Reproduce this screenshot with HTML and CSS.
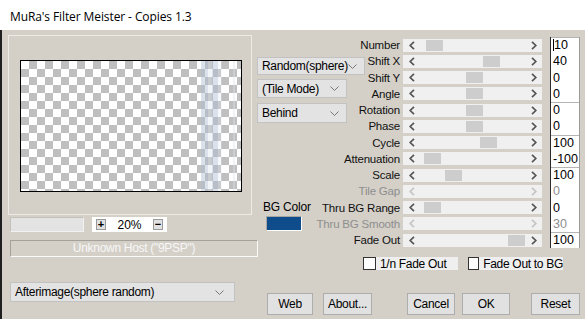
FILE: index.html
```html
<!DOCTYPE html>
<html lang="en">
	<head>
		<meta charset="UTF-8" />
		<meta name="viewport" content="width=device-width, initial-scale=1.0" />
		<title>MuRa's Filter Meister - Copies 1.3</title>
		<link rel="stylesheet" href="styles.css">
	</head>
	<body>
		<div class="titlebar">MuRa's Filter Meister - Copies 1.3</div>

		<div class="client">
			<div class="left">
				<div class="groupbox">
					<div class="preview"><div class="streak"></div></div>
				</div>

				<div class="zoom-row">
					<div class="progress"></div>
					<div class="zoom">
						<span class="zbtn">+</span>
						<span class="zval">20%</span>
						<span class="zbtn">&minus;</span>
					</div>
				</div>

				<div class="host">Unknown Host ("9PSP")</div>

				<div class="select select-wide">
					<span>Afterimage(sphere random)</span>
					<svg width="9" height="5" viewBox="0 0 9 5"><polyline points="0.5,0.5 4.5,4.5 8.5,0.5" /></svg>
				</div>
			</div>

			<div class="right">
				<div class="top">
					<div class="mid">
						<div class="select select-random">
							<span>Random(sphere)</span>
							<svg width="9" height="5" viewBox="0 0 9 5"><polyline points="0.5,0.5 4.5,4.5 8.5,0.5" /></svg>
						</div>
						<div class="select select-tile">
							<span>(Tile Mode)</span>
							<svg width="9" height="5" viewBox="0 0 9 5"><polyline points="0.5,0.5 4.5,4.5 8.5,0.5" /></svg>
						</div>
						<div class="select select-behind">
							<span>Behind</span>
							<svg width="9" height="5" viewBox="0 0 9 5"><polyline points="0.5,0.5 4.5,4.5 8.5,0.5" /></svg>
						</div>

						<div class="bg-label">BG Color</div>
						<div class="swatch"></div>
					</div>

					<div class="sliders" id="sliders"></div>
				</div>

				<div class="checks">
					<div class="check"><span class="box"></span>1/n Fade Out</div>
					<div class="check check-2"><span class="box"></span>Fade Out to BG</div>
				</div>

				<div class="buttons">
					<button class="btn btn-web">Web</button>
					<button class="btn btn-about">About...</button>
					<button class="btn btn-cancel">Cancel</button>
					<button class="btn btn-ok">OK</button>
					<button class="btn btn-reset">Reset</button>
				</div>
			</div>
		</div>

		<script>
			// label, value, thumb offset in px (null = disabled), group start
			const rows = [
				["Number", "10", 6, true],
				["Shift X", "40", 63, false],
				["Shift Y", "0", 46, false],
				["Angle", "0", 46, false],
				["Rotation", "0", 46, true],
				["Phase", "0", 46, false],
				["Cycle", "100", 60, true],
				["Attenuation", "-100", 4, false],
				["Scale", "100", 25, true],
				["Tile Gap", "0", null, false],
				["Thru BG Range", "0", 4, false],
				["Thru BG Smooth", "30", null, false],
				["Fade Out", "100", 88, true],
			];

			const left = '<svg width="6" height="9" viewBox="0 0 6 9"><polyline points="5,0.8 1.2,4.5 5,8.2" /></svg>';
			const right = '<svg width="6" height="9" viewBox="0 0 6 9"><polyline points="1,0.8 4.8,4.5 1,8.2" /></svg>';

			const sliders = document.getElementById("sliders");
			rows.forEach(([label, value, pos, group], i) => {
				const off = pos === null;

				const name = document.createElement("div");
				name.className = "s-label" + (off ? " off" : "");
				name.innerHTML = "<span>" + label + "</span>";

				const track = document.createElement("div");
				track.className = "track" + (off ? " off" : "");
				let rail = '<div class="rail">';
				if (!off) rail += '<div class="thumb" style="margin-left:' + pos + 'px"></div>';
				rail += "</div>";
				track.innerHTML = '<span class="arrow">' + left + "</span>" + rail + '<span class="arrow">' + right + "</span>";

				const val = document.createElement("div");
				val.className = "val" + (off ? " off" : "") + (group ? " group" : "");
				val.innerHTML = (i === 0 ? '<span class="caret"></span>' : "") + value;

				sliders.append(name, track, val);
			});
		</script>
	</body>
</html>
```

FILE: styles.css
```css
* {
	box-sizing: border-box;
}
body {
	margin: 0;
	width: 585px;
	height: 319px;
	overflow: hidden;
	font-family: "Liberation Sans", Arial, sans-serif;
	font-size: 11px;
	letter-spacing: -0.3px;
	background-color: #d4d0c8;
	color: #000;
}
.titlebar {
	height: 30px;
	background-color: #fff;
	padding: 8px 0 0 10px;
	font-family: "Open Sans", "Liberation Sans", sans-serif;
	font-size: 12px;
	letter-spacing: -0.1px;
	color: #000;
}
.client {
	display: flex;
	height: 289px;
	border-left: 2px solid #1f1f1f;
	padding-left: 6px;
}

/* left column */
.left {
	width: 249px;
	flex-shrink: 0;
	padding-top: 5px;
}
.groupbox {
	width: 244px;
	height: 180px;
	border: 1px solid #ecebe6;
	padding: 24px 0 0 11px;
}
.preview {
	width: 222px;
	height: 132px;
	border: 1px solid #000;
	background-color: #fff;
	background-image: conic-gradient(#bfbfbf 25%, transparent 0 50%, #bfbfbf 0 75%, transparent 0);
	background-size: 16px 16px;
	overflow: hidden;
}
.streak {
	width: 222px;
	height: 130px;
	background: linear-gradient(90deg,
		transparent 180px,
		rgba(175, 190, 210, 0.45) 180px,
		rgba(175, 190, 210, 0.45) 187px,
		rgba(215, 225, 235, 0.35) 187px,
		rgba(215, 225, 235, 0.35) 191px,
		rgba(175, 190, 210, 0.45) 191px,
		rgba(175, 190, 210, 0.45) 197px,
		rgba(225, 232, 240, 0.3) 197px,
		rgba(225, 232, 240, 0.3) 201px,
		transparent 201px,
		transparent 212px,
		rgba(220, 228, 236, 0.4) 212px,
		rgba(220, 228, 236, 0.4) 214px,
		transparent 214px);
}
.zoom-row {
	display: flex;
	gap: 8px;
	margin: 2px 0 0 2px;
	height: 15px;
}
.progress {
	width: 74px;
	background-color: #e3e3e3;
	border: 1px solid #c4c1ba;
	border-right-color: #f2f2f2;
	border-bottom-color: #f2f2f2;
}
.zoom {
	width: 75px;
	background-color: #fff;
	display: flex;
	align-items: center;
	padding: 0 4px;
}
.zbtn {
	width: 10px;
	height: 11px;
	background-color: #e1e1e1;
	border: 1px solid #9a9a9a;
	font-size: 11px;
	font-weight: bold;
	line-height: 8px;
	text-align: center;
	letter-spacing: 0;
}
.zval {
	flex: 1;
	text-align: center;
	font-size: 12px;
	letter-spacing: 0;
}
.host {
	margin: 8px 0 0 2px;
	width: 248px;
	height: 17px;
	border: 1px solid #a4a19a;
	border-right-color: #fafafa;
	border-bottom-color: #fafafa;
	color: #f7f7f7;
	text-align: center;
	font-size: 12px;
	line-height: 15px;
}
.select {
	display: flex;
	align-items: center;
	justify-content: space-between;
	height: 19px;
	padding: 0 7px 0 4px;
	background-color: #e3e3e3;
	border: 1px solid #c2c2c2;
	font-size: 12px;
	letter-spacing: -0.3px;
	white-space: nowrap;
}
.select svg {
	flex-shrink: 0;
	fill: none;
	stroke: #777;
	stroke-width: 1;
}
.select-wide {
	margin: 25px 0 0 2px;
	width: 225px;
	height: 20px;
	padding-right: 10px;
}

/* right part */
.right {
	flex: 1;
	padding-top: 7px;
}
.top {
	display: flex;
}
.mid {
	width: 63px;
	flex-shrink: 0;
}
.select-random {
	margin-top: 20px;
	width: 108px;
	height: 18px;
}
.select-tile {
	margin-top: 4px;
	width: 90px;
}
.select-behind {
	margin-top: 5px;
	width: 90px;
	height: 20px;
}
.bg-label {
	margin: 77px 0 0 6px;
	font-size: 12px;
	letter-spacing: -0.2px;
	white-space: nowrap;
}
.swatch {
	margin: 2px 0 0 9px;
	width: 36px;
	height: 15px;
	background-color: #0f4c8c;
	border: 1px solid #fff;
	border-top-color: #a8a6a0;
	border-left-color: #a8a6a0;
}
.sliders {
	display: grid;
	grid-template-columns: 80px 139px 30px;
	grid-auto-rows: 16.25px;
	column-gap: 3px;
}
.s-label {
	display: flex;
	justify-content: flex-end;
	align-items: center;
	white-space: nowrap;
	font-size: 11.5px;
	letter-spacing: -0.2px;
	color: #111;
}
.s-label.off {
	color: #8e8e8e;
}
.track {
	display: flex;
	align-self: center;
	height: 13px;
	background-color: #f0f0f0;
}
.arrow {
	width: 17px;
	display: flex;
	align-items: center;
	justify-content: center;
}
.arrow svg {
	fill: none;
	stroke: #555;
	stroke-width: 1.7;
}
.track.off .arrow svg {
	stroke: #c4c4c4;
}
.rail {
	flex: 1;
	padding-top: 1px;
}
.thumb {
	width: 17px;
	height: 11px;
	background-color: #cdcdcd;
}
.val {
	margin-left: 5px;
	width: 30px;
	background-color: #fff;
	border-left: 1px solid #2a2a2a;
	border-right: 1px solid #9a9a9a;
	padding-left: 2px;
	font-size: 12.5px;
	letter-spacing: 0;
	line-height: 16px;
}
.val.group {
	box-shadow: inset 0 1px 0 #b5b5b5;
}
.val.off {
	color: #8e8e8e;
}
.caret {
	display: inline-block;
	width: 1px;
	height: 12px;
	background-color: #000;
	vertical-align: -2px;
}
.checks {
	display: flex;
	gap: 10px;
	margin: 9px 0 0 106px;
}
.check {
	display: flex;
	align-items: center;
	gap: 4px;
	width: 95px;
	height: 13px;
	background-color: #efefef;
	font-size: 12px;
	white-space: nowrap;
}
.box {
	width: 13px;
	height: 13px;
	background-color: #fff;
	border: 1px solid #333;
}
.buttons {
	display: flex;
	margin: 23px 0 0 10px;
}
.btn {
	height: 22px;
	padding: 0;
	background-color: #e1e1e1;
	border: 1px solid #adadad;
	font-family: "Liberation Sans", Arial, sans-serif;
	font-size: 12px;
	letter-spacing: -0.3px;
	color: #000;
}
.btn-web {
	width: 46px;
}
.btn-about {
	width: 49px;
	margin-left: 10px;
}
.btn-cancel {
	width: 48px;
	margin-left: 35px;
}
.btn-ok {
	width: 48px;
	margin-left: 7px;
}
.btn-reset {
	width: 49px;
	margin-left: 21px;
}
```
